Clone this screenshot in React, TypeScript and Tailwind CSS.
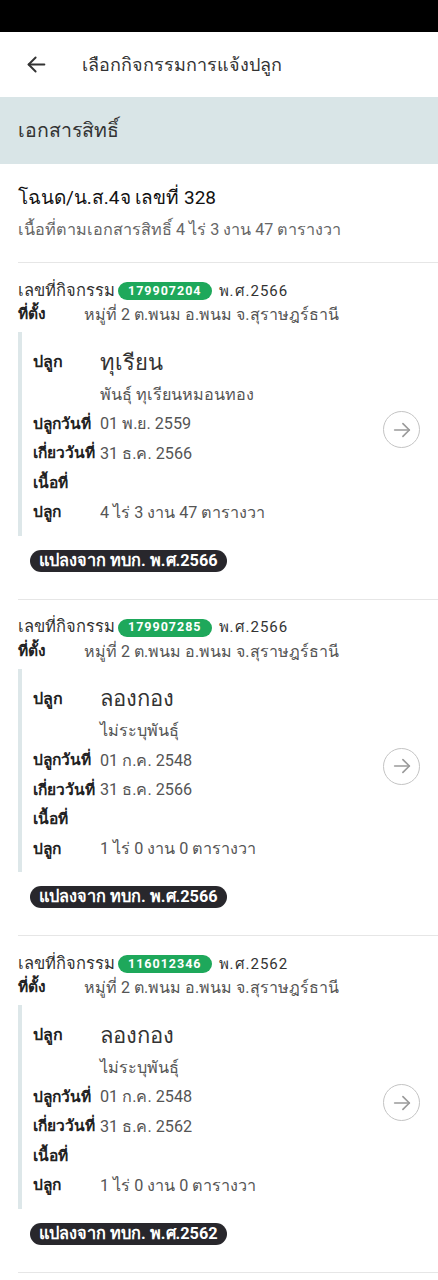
import React from 'react';

type Activity = {
  id: string;
  year: string;
  address: string;
  crop: string;
  variety: string;
  plantDate: string;
  harvestDate: string;
  area: string;
  source: string;
};

const activities: Activity[] = [
  {
    id: '179907204',
    year: 'พ.ศ.2566',
    address: 'หมู่ที่ 2 ต.พนม อ.พนม จ.สุราษฎร์ธานี',
    crop: 'ทุเรียน',
    variety: 'พันธุ์ ทุเรียนหมอนทอง',
    plantDate: '01 พ.ย. 2559',
    harvestDate: '31 ธ.ค. 2566',
    area: '4 ไร่ 3 งาน 47 ตารางวา',
    source: 'แปลงจาก ทบก. พ.ศ.2566',
  },
  {
    id: '179907285',
    year: 'พ.ศ.2566',
    address: 'หมู่ที่ 2 ต.พนม อ.พนม จ.สุราษฎร์ธานี',
    crop: 'ลองกอง',
    variety: 'ไม่ระบุพันธุ์',
    plantDate: '01 ก.ค. 2548',
    harvestDate: '31 ธ.ค. 2566',
    area: '1 ไร่ 0 งาน 0 ตารางวา',
    source: 'แปลงจาก ทบก. พ.ศ.2566',
  },
  {
    id: '116012346',
    year: 'พ.ศ.2562',
    address: 'หมู่ที่ 2 ต.พนม อ.พนม จ.สุราษฎร์ธานี',
    crop: 'ลองกอง',
    variety: 'ไม่ระบุพันธุ์',
    plantDate: '01 ก.ค. 2548',
    harvestDate: '31 ธ.ค. 2562',
    area: '1 ไร่ 0 งาน 0 ตารางวา',
    source: 'แปลงจาก ทบก. พ.ศ.2562',
  },
];

function ArrowCircle() {
  return (
    <div className="w-[37px] h-[37px] mb-[12px] shrink-0 rounded-full border-[1.5px] border-[#c4c4c4] flex items-center justify-center">
      <svg width="22" height="22" viewBox="0 0 24 24" fill="none" stroke="#9a9a9a" strokeWidth="1.8" strokeLinecap="round" strokeLinejoin="round">
        <path d="M4 12h16" />
        <path d="M13 5l7 7-7 7" />
      </svg>
    </div>
  );
}

function ActivityCard({ a }: { a: Activity }) {
  return (
    <div className="pt-[16px] pb-[26px] border-b border-[#e6e6e6] ml-[18px]">
      {/* Activity id row */}
      <div className="h-[24px] flex items-center text-[16.5px] text-[#333]">
        <span>เลขที่กิจกรรม</span>
        <span className="ml-[3px] h-[18px] px-[10px] rounded-full bg-[#1ea85b] text-white text-[12.5px] font-bold tracking-[1px] flex items-center">
          {a.id}
        </span>
        <span className="ml-[7px] text-[15px] tracking-[1px]">{a.year}</span>
      </div>
      <div className="h-[24px] flex items-center">
        <span className="w-[66px] font-bold text-[#222] text-[15.5px]">ที่ตั้ง</span>
        <span className="text-[#555] text-[16px]">{a.address}</span>
      </div>

      {/* Crop block */}
      <div className="mt-[5px] mr-[18px] border-l-[4px] border-[#dde7e9] pt-[12px] pb-[8px] pl-[11px] flex items-center">
        <div className="flex-1 text-[16.2px]">
          <div className="h-[36px] flex items-center">
            <span className="w-[67px] font-bold text-[#222] text-[16px]">ปลูก</span>
            <span className="text-[22px] text-[#333]">{a.crop}</span>
          </div>
          <div className="h-[29.5px] flex items-center">
            <span className="w-[67px]" />
            <span className="text-[#555]">{a.variety}</span>
          </div>
          <div className="h-[29.5px] flex items-center">
            <span className="w-[67px] font-bold text-[#222] text-[15.5px] whitespace-nowrap">ปลูกวันที่</span>
            <span className="text-[#555]">{a.plantDate}</span>
          </div>
          <div className="h-[29.5px] flex items-center">
            <span className="w-[67px] font-bold text-[#222] text-[15.5px] whitespace-nowrap">เกี่ยววันที่</span>
            <span className="text-[#555]">{a.harvestDate}</span>
          </div>
          <div className="h-[29.5px] flex items-center">
            <span className="w-[67px] font-bold text-[#222] text-[15.5px]">เนื้อที่</span>
          </div>
          <div className="h-[29.5px] flex items-center">
            <span className="w-[67px] font-bold text-[#222] text-[15.5px]">ปลูก</span>
            <span className="text-[#555]">{a.area}</span>
          </div>
        </div>
        <ArrowCircle />
      </div>

      <div className="mt-[13px] ml-[12px]">
        <span className="inline-flex items-center h-[22px] px-[9px] rounded-full bg-[#28272c] text-white text-[16.3px] font-bold">
          {a.source}
        </span>
      </div>
    </div>
  );
}

export default function App() {
  return (
    <div className="w-[438px] min-h-[1280px] bg-white" style={{ fontFamily: 'Roboto, "Noto Sans", "DejaVu Sans", sans-serif' }}>
      {/* status bar */}
      <div className="h-[32px] bg-black" />

      {/* header */}
      <div className="h-[65px] flex items-center">
        <div className="w-[82px] flex items-center pl-[26px]">
          <svg width="21" height="21" viewBox="0 0 24 24" fill="none" stroke="#333" strokeWidth="2.2" strokeLinecap="round" strokeLinejoin="round">
            <path d="M21 12H3" />
            <path d="M11 4l-8 8 8 8" />
          </svg>
        </div>
        <span className="text-[18px] text-[#333]">เลือกกิจกรรมการแจ้งปลูก</span>
      </div>

      {/* section band */}
      <div className="h-[67px] bg-[#d9e5e7] flex items-center px-[18px]">
        <span className="text-[19.5px] text-[#333]">เอกสารสิทธิ์</span>
      </div>

      {/* document info */}
      <div className="pt-[19px] pb-[20px] px-[18px]">
        <div className="h-[30px] flex items-center text-[19px] text-[#111]">โฉนด/น.ส.4จ เลขที่ 328</div>
        <div className="mt-[5px] h-[24px] flex items-center text-[16.2px] text-[#666]">
          เนื้อที่ตามเอกสารสิทธิ์ 4 ไร่ 3 งาน 47 ตารางวา
        </div>
      </div>
      <div className="ml-[18px] border-t border-[#e6e6e6]" />

      {activities.map((a) => (
        <ActivityCard key={a.id} a={a} />
      ))}
    </div>
  );
}
